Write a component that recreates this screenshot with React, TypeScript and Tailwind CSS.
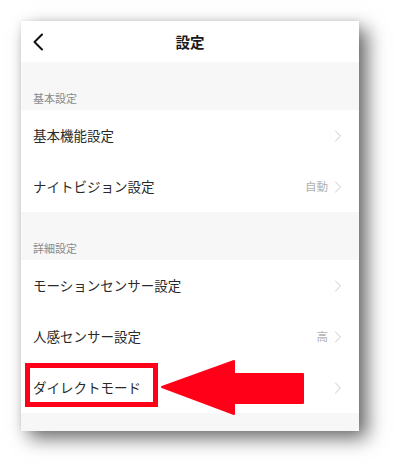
import { ChevronRight } from "lucide-react"

interface Row {
  label: string
  value?: string
}

const basic: Row[] = [
  { label: "基本機能設定" },
  { label: "ナイトビジョン設定", value: "自動" },
]

const detail: Row[] = [
  { label: "モーションセンサー設定" },
  { label: "人感センサー設定", value: "高" },
  { label: "ダイレクトモード" },
]

function SectionHead({ title }: { title: string }) {
  return (
    <div className="h-[48px] bg-[#f7f7f7] flex items-end pb-[6px] px-[12px]">
      <span className="text-[11px] text-[#8a8a8a] leading-none">{title}</span>
    </div>
  )
}

function SettingRow({ row }: { row: Row }) {
  return (
    <div className="h-[51px] flex items-center justify-between pl-[12px] pr-[11px] bg-white">
      <span className="text-[13.5px] text-[#2a2a2a]">{row.label}</span>
      <div className="flex items-center">
        {row.value && <span className="text-[11.5px] text-[#b0b0b0]">{row.value}</span>}
        <ChevronRight className="w-[20px] h-[20px] text-[#c4c4c4]" strokeWidth={1.1} />
      </div>
    </div>
  )
}

export default function App() {
  return (
    <div
      className="w-[401px] h-[473px] bg-white pt-[21px] pl-[21px]"
      style={{ fontFamily: '"Noto Sans CJK JP", "Noto Sans", sans-serif' }}
    >
      <div className="relative w-[338px] h-[409px] bg-white shadow-[8px_8px_18px_rgba(0,0,0,0.6),0_0_6px_rgba(0,0,0,0.08)]">
        {/* header */}
        <div className="h-[41px] flex items-center relative">
          <svg className="absolute left-[11px] top-[12px]" width="12" height="18" viewBox="0 0 12 18">
            <path d="M10 1.5 L2.5 9 L10 16.5" fill="none" stroke="#111" strokeWidth="2" strokeLinecap="round" strokeLinejoin="round" />
          </svg>
          <span className="mx-auto text-[14.5px] font-bold text-[#1a1a1a]">設定</span>
        </div>

        <SectionHead title="基本設定" />
        {basic.map((r) => (
          <SettingRow key={r.label} row={r} />
        ))}

        <SectionHead title="詳細設定" />
        {detail.map((r) => (
          <SettingRow key={r.label} row={r} />
        ))}
        <div className="h-[18px] bg-[#f7f7f7]" />

        {/* highlight box */}
        <div className="absolute left-[4px] top-[342px] w-[133px] h-[44px] border-[5px] border-[#ff0018]" />

        {/* arrow */}
        <svg className="absolute left-[139px] top-[338px]" width="146" height="56" viewBox="0 0 146 56">
          <path
            d="M2 28 L74 2 L74 15 L143 15 L143 44 L74 44 L74 55 Z"
            fill="#ff0018"
            stroke="#ff0018"
            strokeWidth="2"
            strokeLinejoin="round"
          />
        </svg>
      </div>
    </div>
  )
}
